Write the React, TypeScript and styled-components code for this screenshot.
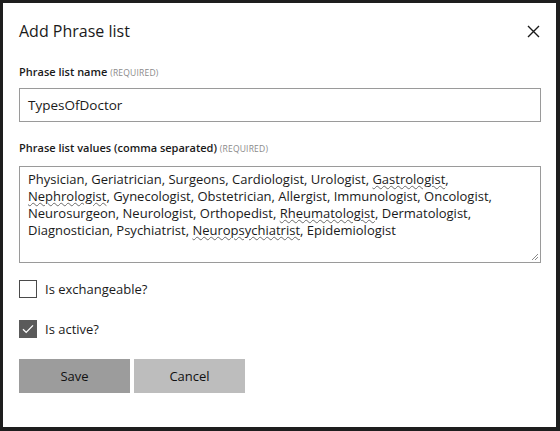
import { createGlobalStyle } from 'styled-components'
import styled from 'styled-components'

const GlobalStyle = createGlobalStyle`
  html, body {
    margin: 0;
    padding: 0;
    background: #ffffff;
  }
  body {
    font-family: 'Open Sans', 'Noto Sans', sans-serif;
    color: #1a1a1a;
  }
`

const Dialog = styled.div`
  box-sizing: border-box;
  width: 560px;
  height: 431px;
  border-style: solid;
  border-color: #1e1e1e;
  border-width: 3px 4px 4px 3px;
  background: #ffffff;
  padding: 16px 15px 0 16px;
  display: flex;
  flex-direction: column;
`

const Header = styled.div`
  display: flex;
  align-items: center;
  justify-content: space-between;
  height: 24px;
`

const Title = styled.h1`
  margin: 0;
  font-size: 16px;
  font-weight: 400;
  line-height: 24px;
  color: #1a1a1a;
`

const CloseButton = styled.button`
  border: 0;
  background: none;
  padding: 0;
  margin-right: 1px;
  width: 13px;
  height: 13px;
  display: flex;
  cursor: pointer;
`

const FieldLabel = styled.label<{ $top: number }>`
  display: block;
  margin-top: ${(p) => p.$top}px;
  font-size: 11px;
  font-weight: 600;
  line-height: 16px;
  color: #1a1a1a;
`

const Required = styled.span`
  font-size: 8.5px;
  font-weight: 400;
  color: #8a8a8a;
  letter-spacing: 0.2px;
`

const TextInput = styled.div`
  box-sizing: border-box;
  margin-top: 7px;
  height: 34px;
  border: 1px solid #9a9a9a;
  padding: 0 8px;
  display: flex;
  align-items: center;
  font-size: 13.5px;
  color: #1a1a1a;
`

const TextArea = styled.div`
  box-sizing: border-box;
  position: relative;
  margin-top: 9px;
  height: 97px;
  border: 1px solid #9a9a9a;
  padding: 4px 8px;
  font-size: 13px;
  line-height: 17px;
  color: #1a1a1a;
`

const Line = styled.div`
  white-space: nowrap;
`

const Misspelled = styled.span`
  text-decoration: underline wavy #6a6a6a;
  text-decoration-thickness: 1px;
  text-underline-offset: 1px;
`

const Grip = styled.svg`
  position: absolute;
  right: 1px;
  bottom: 1px;
`

const CheckRow = styled.label<{ $top: number }>`
  display: flex;
  align-items: center;
  gap: 8px;
  margin-top: ${(p) => p.$top}px;
  height: 18px;
  font-size: 13px;
  color: #1a1a1a;
`

const Box = styled.span<{ $checked?: boolean }>`
  box-sizing: border-box;
  width: 18px;
  height: 18px;
  border: 1px solid ${(p) => (p.$checked ? '#5a5a5a' : '#4a4a4a')};
  background: ${(p) => (p.$checked ? '#5a5a5a' : '#ffffff')};
  display: flex;
  align-items: center;
  justify-content: center;
`

const Actions = styled.div`
  display: flex;
  gap: 4px;
  margin-top: 21px;
`

const ActionButton = styled.button<{ $primary?: boolean }>`
  width: 111px;
  height: 34px;
  border: 0;
  padding: 0;
  background: ${(p) => (p.$primary ? '#9c9c9c' : '#bdbdbd')};
  font-family: inherit;
  font-size: 13px;
  color: #111111;
  cursor: pointer;
`

const values: { text: string; wavy?: boolean }[][] = [
  [
    { text: 'Physician, Geriatrician, Surgeons, Cardiologist, Urologist, ' },
    { text: 'Gastrologist', wavy: true },
    { text: ',' },
  ],
  [
    { text: 'Nephrologist', wavy: true },
    { text: ', Gynecologist, Obstetrician, Allergist, Immunologist, Oncologist,' },
  ],
  [
    { text: 'Neurosurgeon, Neurologist, Orthopedist, ' },
    { text: 'Rheumatologist', wavy: true },
    { text: ', Dermatologist,' },
  ],
  [
    { text: 'Diagnostician, Psychiatrist, ' },
    { text: 'Neuropsychiatrist', wavy: true },
    { text: ', Epidemiologist' },
  ],
]

const App = () => {
  return (
    <>
      <GlobalStyle />
      <Dialog>
        <Header>
          <Title>Add Phrase list</Title>
          <CloseButton aria-label="Close">
            <svg width="13" height="13" viewBox="0 0 13 13">
              <path d="M1 1L12 12M12 1L1 12" stroke="#1a1a1a" strokeWidth="1.4" fill="none" />
            </svg>
          </CloseButton>
        </Header>

        <FieldLabel $top={21}>
          Phrase list name <Required>(REQUIRED)</Required>
        </FieldLabel>
        <TextInput>TypesOfDoctor</TextInput>

        <FieldLabel $top={18}>
          Phrase list values (comma separated) <Required>(REQUIRED)</Required>
        </FieldLabel>
        <TextArea>
          {values.map((line, i) => (
            <Line key={i}>
              {line.map((part, j) =>
                part.wavy ? (
                  <Misspelled key={j}>{part.text}</Misspelled>
                ) : (
                  <span key={j}>{part.text}</span>
                ),
              )}
            </Line>
          ))}
          <Grip width="8" height="8" viewBox="0 0 8 8">
            <path d="M7 1L1 7M7 4L4 7" stroke="#8a8a8a" strokeWidth="1" fill="none" />
          </Grip>
        </TextArea>

        <CheckRow $top={17}>
          <Box />
          Is exchangeable?
        </CheckRow>
        <CheckRow $top={22}>
          <Box $checked>
            <svg width="12" height="10" viewBox="0 0 12 10">
              <path d="M1 5.2L4.2 8.4L11 1.4" stroke="#ffffff" strokeWidth="1.3" fill="none" />
            </svg>
          </Box>
          Is active?
        </CheckRow>

        <Actions>
          <ActionButton $primary>Save</ActionButton>
          <ActionButton>Cancel</ActionButton>
        </Actions>
      </Dialog>
    </>
  )
}

export default App
